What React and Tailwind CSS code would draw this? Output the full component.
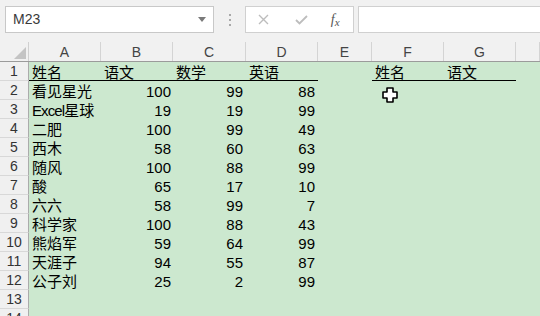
import React from "react";

const rows = [
  ["看见星光", 100, 99, 88],
  ["Excel星球", 19, 19, 99],
  ["二肥", 100, 99, 49],
  ["西木", 58, 60, 63],
  ["随风", 100, 88, 99],
  ["酸", 65, 17, 10],
  ["六六", 58, 99, 7],
  ["科学家", 100, 88, 43],
  ["熊焰军", 59, 64, 99],
  ["天涯子", 94, 55, 87],
  ["公子刘", 25, 2, 99],
];

const cols = ["A", "B", "C", "D", "E", "F", "G", ""];
const colW = ["w-[72px]", "w-[72px]", "w-[73px]", "w-[72px]", "w-[54px]", "w-[72px]", "w-[72px]", "flex-1"];

function Row({ n, cells, first }) {
  return (
    <div className="flex h-[19px]">
      <div className={`w-[29px] shrink-0 flex justify-center bg-[#f0f0f0] border-r border-r-[#ababab] border-b border-b-[#d8d8d8] text-[14px] text-[#333] ${first ? "items-end leading-[17px]" : "items-center leading-[19px] pt-[1px]"}`}>
        {n}
      </div>
      {cells}
    </div>
  );
}

function nameCell(name) {
  if (name.startsWith("Excel")) {
    return (
      <>
        <span className="tracking-[-0.9px]">Excel</span>
        {name.slice(5)}
      </>
    );
  }
  return name;
}

export default function App() {
  const font = { fontFamily: '"Liberation Sans", "Noto Sans CJK SC", sans-serif' };
  const h1 = "shrink-0 border-b border-black pl-[3px] text-[15px] leading-[17px] pt-[2px] text-black";
  const d = "shrink-0 text-[15px] leading-[19px] pt-[1px] text-black";
  return (
    <div className="w-[540px] h-[316px] overflow-hidden bg-[#cce8cf] relative" style={font}>
      {/* toolbar */}
      <div className="h-[42px] bg-[#f1f1f1] flex items-start pt-[6px] pl-[5px]">
        <div className="w-[209px] h-[27px] bg-white border border-[#c8c8c8] flex items-center pl-[7px] pr-[7px] text-[14px] text-[#3a3a3a]">
          <span className="flex-1">M23</span>
          <svg width="8" height="5" viewBox="0 0 8 5"><polygon points="0,0 8,0 4,5" fill="#7a7a7a" /></svg>
        </div>
        <div className="w-[31px] h-[27px] flex flex-col items-center justify-center gap-[3px]">
          <div className="w-[2px] h-[2px] bg-[#a8a8a8]" />
          <div className="w-[2px] h-[2px] bg-[#a8a8a8]" />
          <div className="w-[2px] h-[2px] bg-[#a8a8a8]" />
        </div>
        <div className="w-[109px] h-[27px] bg-white border border-[#d0d0d0] flex items-center">
          <div className="w-[36px] flex justify-center">
            <svg width="11" height="11" viewBox="0 0 11 11"><path d="M1 1 L10 10 M10 1 L1 10" stroke="#bdbdbd" strokeWidth="1.4" /></svg>
          </div>
          <div className="w-[36px] flex justify-center pl-[3px]">
            <svg width="13" height="10" viewBox="0 0 13 10"><path d="M1 5 L4.5 8.5 L12 1" stroke="#bdbdbd" strokeWidth="1.8" fill="none" /></svg>
          </div>
          <div className="w-[36px] flex justify-center text-[#555] italic text-[14px]" style={{ fontFamily: '"Liberation Serif", serif' }}>
            <span>f<span className="text-[11px] relative top-[2px]">x</span></span>
          </div>
        </div>
        <div className="ml-[4px] flex-1 h-[27px] bg-white border border-[#d0d0d0] border-r-0" />
      </div>

      {/* column header */}
      <div className="flex h-[20px] bg-[#f1f1f1] border-b border-b-[#9b9b9b]">
        <div className="w-[29px] shrink-0 border-r border-r-[#d0d0d0] relative">
          <svg className="absolute right-[2px] bottom-[2px]" width="12" height="12" viewBox="0 0 12 12"><polygon points="12,0 12,12 0,12" fill="#c4c4c4" /></svg>
        </div>
        {cols.map((c, i) => (
          <div key={i} className={`${colW[i]} shrink-0 flex items-end justify-center border-r border-r-[#d4d4d4] text-[14px] leading-[17px] text-[#444]`}>
            {c}
          </div>
        ))}
      </div>

      {/* row 1 */}
      <Row
        n={1}
        first
        cells={
          <>
            <div className={`w-[72px] ${h1}`}>姓名</div>
            <div className={`w-[72px] ${h1}`}>语文</div>
            <div className={`w-[73px] ${h1}`}>数学</div>
            <div className={`w-[72px] ${h1}`}>英语</div>
            <div className="w-[54px] shrink-0" />
            <div className={`w-[72px] ${h1}`}>姓名</div>
            <div className={`w-[72px] ${h1}`}>语文</div>
          </>
        }
      />
      {rows.map((r, i) => (
        <Row
          key={i}
          n={i + 2}
          cells={
            <>
              <div className={`w-[72px] pl-[3px] whitespace-nowrap ${d}`}>{nameCell(r[0])}</div>
              <div className={`w-[72px] pr-[2px] text-right ${d}`}>{r[1]}</div>
              <div className={`w-[73px] pr-[3px] text-right ${d}`}>{r[2]}</div>
              <div className={`w-[72px] pr-[3px] text-right ${d}`}>{r[3]}</div>
            </>
          }
        />
      ))}
      <Row n={13} cells={null} />
      <Row n={14} cells={null} />

      {/* cursor */}
      <svg className="absolute left-[382px] top-[87px]" width="16" height="16" viewBox="0 0 16 16">
        <polygon points="5,1 11,1 11,5 15,5 15,11 11,11 11,15 5,15 5,11 1,11 1,5 5,5" fill="white" stroke="black" strokeWidth="1.6" strokeLinejoin="round" />
      </svg>
    </div>
  );
}
